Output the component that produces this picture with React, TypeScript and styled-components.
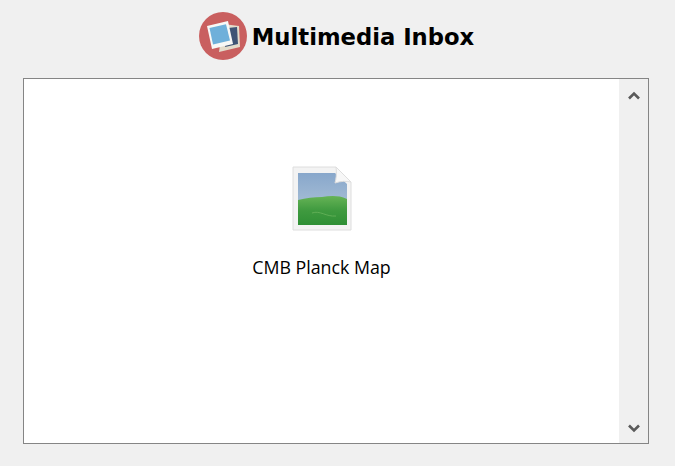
import React from "react";
import styled, { createGlobalStyle } from "styled-components";

const GlobalStyle = createGlobalStyle`
  html, body {
    margin: 0;
    padding: 0;
    background: #f0f0f0;
  }
`;

const Page = styled.div`
  width: 675px;
  height: 466px;
  box-sizing: border-box;
  padding: 12px 26px 22px 23px;
  display: flex;
  flex-direction: column;
  gap: 18px;
  background: #f0f0f0;
  overflow: hidden;
`;

const Header = styled.header`
  height: 48px;
  display: flex;
  align-items: center;
  justify-content: center;
  gap: 5px;
  padding-left: 1px;
`;

const Title = styled.h1`
  margin: 0;
  padding-top: 2px;
  font-family: "DejaVu Sans", sans-serif;
  font-size: 22.7px;
  font-weight: 700;
  color: #000;
  white-space: nowrap;
`;

const Frame = styled.div`
  flex: 1;
  display: flex;
  border: 1px solid #858585;
  background: #fff;
  min-height: 0;
`;

const Content = styled.div`
  flex: 1;
  display: flex;
  flex-direction: column;
  align-items: center;
  padding-top: 87px;
`;

const FileItem = styled.div`
  display: flex;
  flex-direction: column;
  align-items: center;
  gap: 23px;
`;

const FileName = styled.span`
  font-family: "Open Sans", "Noto Sans", sans-serif;
  font-size: 17.8px;
  line-height: 24px;
  color: #000;
  white-space: nowrap;
`;

const Scrollbar = styled.div`
  width: 29px;
  background: #f0f0f0;
  display: flex;
  flex-direction: column;
  justify-content: space-between;
  align-items: center;
  padding: 12px 0 10px;
  box-sizing: border-box;
`;

const ArrowIcon = ({ down }: { down?: boolean }) => (
  <svg width="12" height="9" viewBox="0 0 12 9">
    <path
      d={down ? "M1 1.5 L6 6.5 L11 1.5" : "M1 7.5 L6 2.5 L11 7.5"}
      fill="none"
      stroke="#5a5a5a"
      strokeWidth="2.6"
    />
  </svg>
);

const AppLogo = () => (
  <svg width="48" height="48" viewBox="0 0 48 48">
    <circle cx="24" cy="24" r="24" fill="#c95f5f" />
    <polygon points="24,12 40,14 41,35 20,40" fill="#e4dccb" />
    <polygon points="29,16 38,15 39,32 26,35" fill="#3f5475" />
    <polygon points="8,14 29,9 34,32 13,37" fill="#f8f8f6" />
    <polygon points="10.5,16 27,12.2 31,28.5 14,32.5" fill="#6fb0da" />
  </svg>
);

const ImageFileIcon = () => (
  <svg width="60" height="66" viewBox="0 0 60 66">
    <defs>
      <linearGradient id="sky" x1="0" y1="0" x2="0" y2="1">
        <stop offset="0" stopColor="#88a7cb" />
        <stop offset="1" stopColor="#b7cbdc" />
      </linearGradient>
      <linearGradient id="hill" x1="0" y1="0" x2="0" y2="1">
        <stop offset="0" stopColor="#66b356" />
        <stop offset="0.5" stopColor="#3f9a3f" />
        <stop offset="1" stopColor="#2f8f35" />
      </linearGradient>
    </defs>
    <path d="M1 1 H44 L59 16 V64 H1 Z" fill="#f3f3f3" stroke="#dedede" />
    <path d="M6 7 H43 L55 18 V59 H6 Z" fill="url(#sky)" />
    <path d="M6 34 C14 32 22 31 30 31 C38 30 46 29 55 33 V59 H6 Z" fill="url(#hill)" />
    <path d="M20 47 C28 44 34 51 44 50" fill="none" stroke="#5fae55" strokeWidth="1" />
    <path d="M44 1 C45 8 44 13 43 17 C49 15 54 15 59 16 Z" fill="#f7f7f7" stroke="#dedede" />
  </svg>
);

export default function App() {
  return (
    <>
      <GlobalStyle />
      <Page>
        <Header>
          <AppLogo />
          <Title>Multimedia Inbox</Title>
        </Header>
        <Frame>
          <Content>
            <FileItem>
              <ImageFileIcon />
              <FileName>CMB Planck Map</FileName>
            </FileItem>
          </Content>
          <Scrollbar>
            <ArrowIcon />
            <ArrowIcon down />
          </Scrollbar>
        </Frame>
      </Page>
    </>
  );
}
